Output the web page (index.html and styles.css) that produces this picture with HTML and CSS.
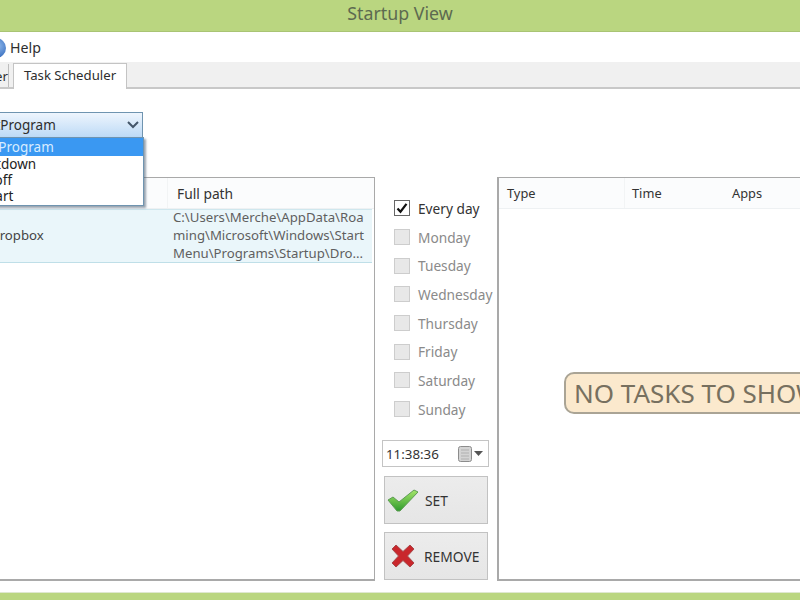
FILE: index.html
```html
<!DOCTYPE html>
<html lang="en">
<head>
<meta charset="utf-8">
<title>Startup View</title>
<link rel="stylesheet" href="styles.css">
</head>
<body>
<div class="window">
  <header class="title">Startup View</header>
  <nav class="menu">
    <svg class="help-icon" width="20" height="20" viewBox="0 0 20 20"><defs><radialGradient id="hb" cx="0.6" cy="0.4" r="0.7"><stop offset="0" stop-color="#8db7ea"/><stop offset="1" stop-color="#2a62b8"/></radialGradient></defs><circle cx="10" cy="10" r="10" fill="url(#hb)"/></svg>
    <span>Help</span>
  </nav>
  <div class="tabs">
    <div class="tab tab-off">Manager</div>
    <div class="tab tab-on">Task Scheduler</div>
  </div>
  <main class="content">
    <div class="toolbar">
      <div class="combo">
        <span class="combo-text">StartProgram</span>
        <svg class="chevron" width="12" height="8" viewBox="0 0 12 8"><path d="M1 1l5 5 5-5" fill="none" stroke="#44566a" stroke-width="2"/></svg>
        <ul class="combo-list">
          <li class="sel">StartProgram</li>
          <li>Shutdown</li>
          <li>Logoff</li>
          <li>Restart</li>
        </ul>
      </div>
    </div>
    <div class="panels">
      <section class="panel panel-left">
        <div class="head">
          <div class="col-name"></div>
          <div class="col-path">Full path</div>
        </div>
        <div class="row">
          <div class="cell-name">Dropbox</div>
          <div class="cell-path">
            <span>C:\Users\Merche\AppData\Roa</span>
            <span>ming\Microsoft\Windows\Start</span>
            <span>Menu\Programs\Startup\Dro...</span>
          </div>
        </div>
      </section>
      <section class="middle">
        <ul class="days">
          <li class="day on"><span class="box"><svg width="12" height="12" viewBox="0 0 12 12"><path d="M1.5 6.5l3 3.2L10.5 1.8" fill="none" stroke="#111" stroke-width="2.2"/></svg></span>Every day</li>
          <li class="day"><span class="box"></span>Monday</li>
          <li class="day"><span class="box"></span>Tuesday</li>
          <li class="day"><span class="box"></span>Wednesday</li>
          <li class="day"><span class="box"></span>Thursday</li>
          <li class="day"><span class="box"></span>Friday</li>
          <li class="day"><span class="box"></span>Saturday</li>
          <li class="day"><span class="box"></span>Sunday</li>
        </ul>
        <div class="time">
          <span>11:38:36</span>
          <span class="time-tools">
            <svg width="14" height="16" viewBox="0 0 14 16"><rect x="0.5" y="0.5" width="13" height="15" rx="2" fill="#d4d4d4" stroke="#8c8c8c"/><path d="M3 4h8M3 7h8M3 10h8M3 13h8" stroke="#b0b0b0"/></svg>
            <svg width="9" height="5" viewBox="0 0 9 5"><path d="M0 0h9L4.500 5z" fill="#555"/></svg>
          </span>
        </div>
        <button class="btn" type="button">
          <svg class="btn-icon" width="32" height="24" viewBox="0 0 32 24"><defs><linearGradient id="gk" x1="0" y1="0" x2="0" y2="1"><stop offset="0" stop-color="#a6e66a"/><stop offset="1" stop-color="#2f9a2c"/></linearGradient></defs><path d="M1 12l5-3 6 5L27 2l4 2-18 19h-3z" fill="url(#gk)" stroke="#5e9c55" stroke-linejoin="round"/></svg>
          <span>SET</span>
        </button>
        <button class="btn" type="button">
          <svg class="btn-icon" width="24" height="24" viewBox="0 0 24 24"><path d="M1 5l4-4 7 6.500L19 1l4 4-6.500 7 6.500 7-4 4-7-6.500L5 23l-4-4 6.500-7z" fill="#c9272c" stroke="#a8484a" stroke-linejoin="round"/></svg>
          <span>REMOVE</span>
        </button>
      </section>
      <section class="panel panel-right">
        <div class="head">
          <div class="col-type">Type</div>
          <div class="col-time">Time</div>
          <div class="col-apps">Apps</div>
        </div>
        <div class="empty"><div class="pill">NO TASKS TO SHOW</div></div>
      </section>
    </div>
  </main>
  <footer class="status"></footer>
</div>
</body>
</html>
```

FILE: styles.css
```css
* { box-sizing: border-box; }
html, body { margin: 0; height: 100%; overflow: hidden; background: #fff; }
body { font-family: "Noto Sans", "Open Sans", sans-serif; font-size: 13px; color: #2e2e2e; }
ul { list-style: none; margin: 0; padding: 0; }

.window { width: 800px; height: 600px; display: flex; flex-direction: column; overflow: hidden; }

.title { height: 32px; flex: none; background: #bad680; border-bottom: 1px solid #a9c474; color: #5d6a50; font-size: 17.800px; line-height: 27px; text-align: center; }

.menu { height: 30px; flex: none; display: flex; align-items: center; gap: 4px; margin-left: -14px; font-size: 14.200px; padding-top: 1px; }
.help-icon { flex: none; }

.tabs { height: 27px; flex: none; display: flex; align-items: flex-end; margin-left: -70px; width: 870px; background: #f0f0f0; border-bottom: 2px solid #c8c8c8; }
.tab { font-size: 13.200px; }
.tab-off { width: 79px; height: 23px; background: #f0f0f0; border-right: 1px solid #bdbdbd; text-align: right; line-height: 24px; }
.tab-on { width: 114px; margin-left: 4px; margin-bottom: -2px; height: 26px; background: #fff; border: 1px solid #c4c4c4; border-bottom: 0; text-align: center; line-height: 22px; }

.content { flex: 1; min-height: 0; display: flex; flex-direction: column; margin-left: -40px; padding-top: 23px; }
.toolbar { height: 65px; flex: none; }

.combo { position: relative; width: 183px; height: 26px; display: flex; align-items: center; justify-content: space-between; padding: 0 3px 0 10px; border: 1px solid #6f94b0; background: linear-gradient(#eef5fd, #bddaf6); font-size: 13.500px; }
.combo-text { margin-left: -1px; }
.combo-list { position: absolute; z-index: 2; left: -1px; top: 24px; width: 184px; height: 69px; background: #fff; border: 1px solid #6f94b0; box-shadow: 2px 2px 2px rgba(70, 90, 110, 0.55); line-height: 16px; font-size: 13.500px; color: #222; }
.combo-list li { height: 16px; }
.combo-list li:nth-child(2) { margin-left: 11px; }
.combo-list li:nth-child(3) { margin-left: 10px; }
.combo-list li:nth-child(4) { margin-left: 7px; }
.combo-list li.sel { height: 18px; background: #3a98f2; color: #d8ecff; line-height: 18px; padding-left: 7px; white-space: nowrap; }

.panels { flex: 1; min-height: 0; display: flex; height: 404px; }
.panel { border: 1px solid #a9a9a9; border-bottom-width: 2px; background: #fff; display: flex; flex-direction: column; }
.panel-left { width: 415px; flex: none; border-left: 0; }
.panel-right { width: 420px; flex: none; border-right: 0; border-left-width: 2px; margin-left: 8px; }

.head { height: 31px; flex: none; display: flex; align-items: center; background: #fbfcfd; border-bottom: 1px solid #eef1f3; font-size: 12.800px; color: #333; }
.col-name { width: 208px; height: 100%; border-right: 1px solid #f2f4f5; }
.col-path { padding-left: 9px; font-size: 13.800px; }
.col-type { width: 126px; height: 100%; padding-left: 8px; line-height: 31px; border-right: 1px solid #f2f4f5; }
.col-time { width: 100px; padding-left: 7px; }
.col-apps { padding-left: 7px; }

.row { height: 54px; flex: none; display: flex; align-items: center; background: #eaf6fa; border-top: 1px solid #cfe7ee; border-bottom: 1px solid #bfdfe8; margin-right: 2px; font-size: 13.200px; }
.cell-name { width: 213px; padding-left: 30px; color: #444; padding-bottom: 3px; }
.cell-path { display: flex; flex-direction: column; line-height: 18px; color: #5f5f5f; white-space: nowrap; padding-bottom: 2px; }

.middle { width: 107px; flex: none; margin-left: 7px; display: flex; flex-direction: column; }
.days { padding: 17px 0 0 12px; height: 263px; flex: none; }
.day { height: 28.700px; display: flex; align-items: center; gap: 8px; color: #8a8a8a; font-size: 13.700px; white-space: nowrap; }
.day.on { color: #333; }
.box { width: 16px; height: 16px; flex: none; display: flex; align-items: center; justify-content: center; background: #e8e8e8; border: 1px solid #cdcdcd; }
.on .box { background: #fff; border-color: #666; }

.time { height: 27px; flex: none; display: flex; align-items: center; justify-content: space-between; border: 1px solid #c4c4c4; padding: 0 5px 0 3px; font-size: 13.300px; color: #333; }
.time-tools { display: flex; align-items: center; gap: 2px; }

.btn { width: 104px; height: 48px; margin: 9px 0 0 2px; padding: 0 0 0 2px; flex: none; display: flex; align-items: center; gap: 6px; border: 1px solid #c2c2c2; background: linear-gradient(#ececec, #e6e6e6); font-family: inherit; font-size: 13.800px; color: #333; }
.btn + .btn { margin-top: 8px; padding-left: 6px; gap: 9px; }
.btn-icon { flex: none; }

.empty { flex: 1; display: flex; align-items: center; padding: 0 0 3px 65px; }
.pill { flex: none; height: 42px; padding: 0 8px; line-height: 38px; font-size: 26px; color: #77705f; background: #fbe9cd; border: 2px solid #aaa495; border-radius: 10px; white-space: nowrap; }

.status { height: 8px; flex: none; margin-top: 11px; background: #bad680; border-top: 1px solid #dfe8d0; }
```
